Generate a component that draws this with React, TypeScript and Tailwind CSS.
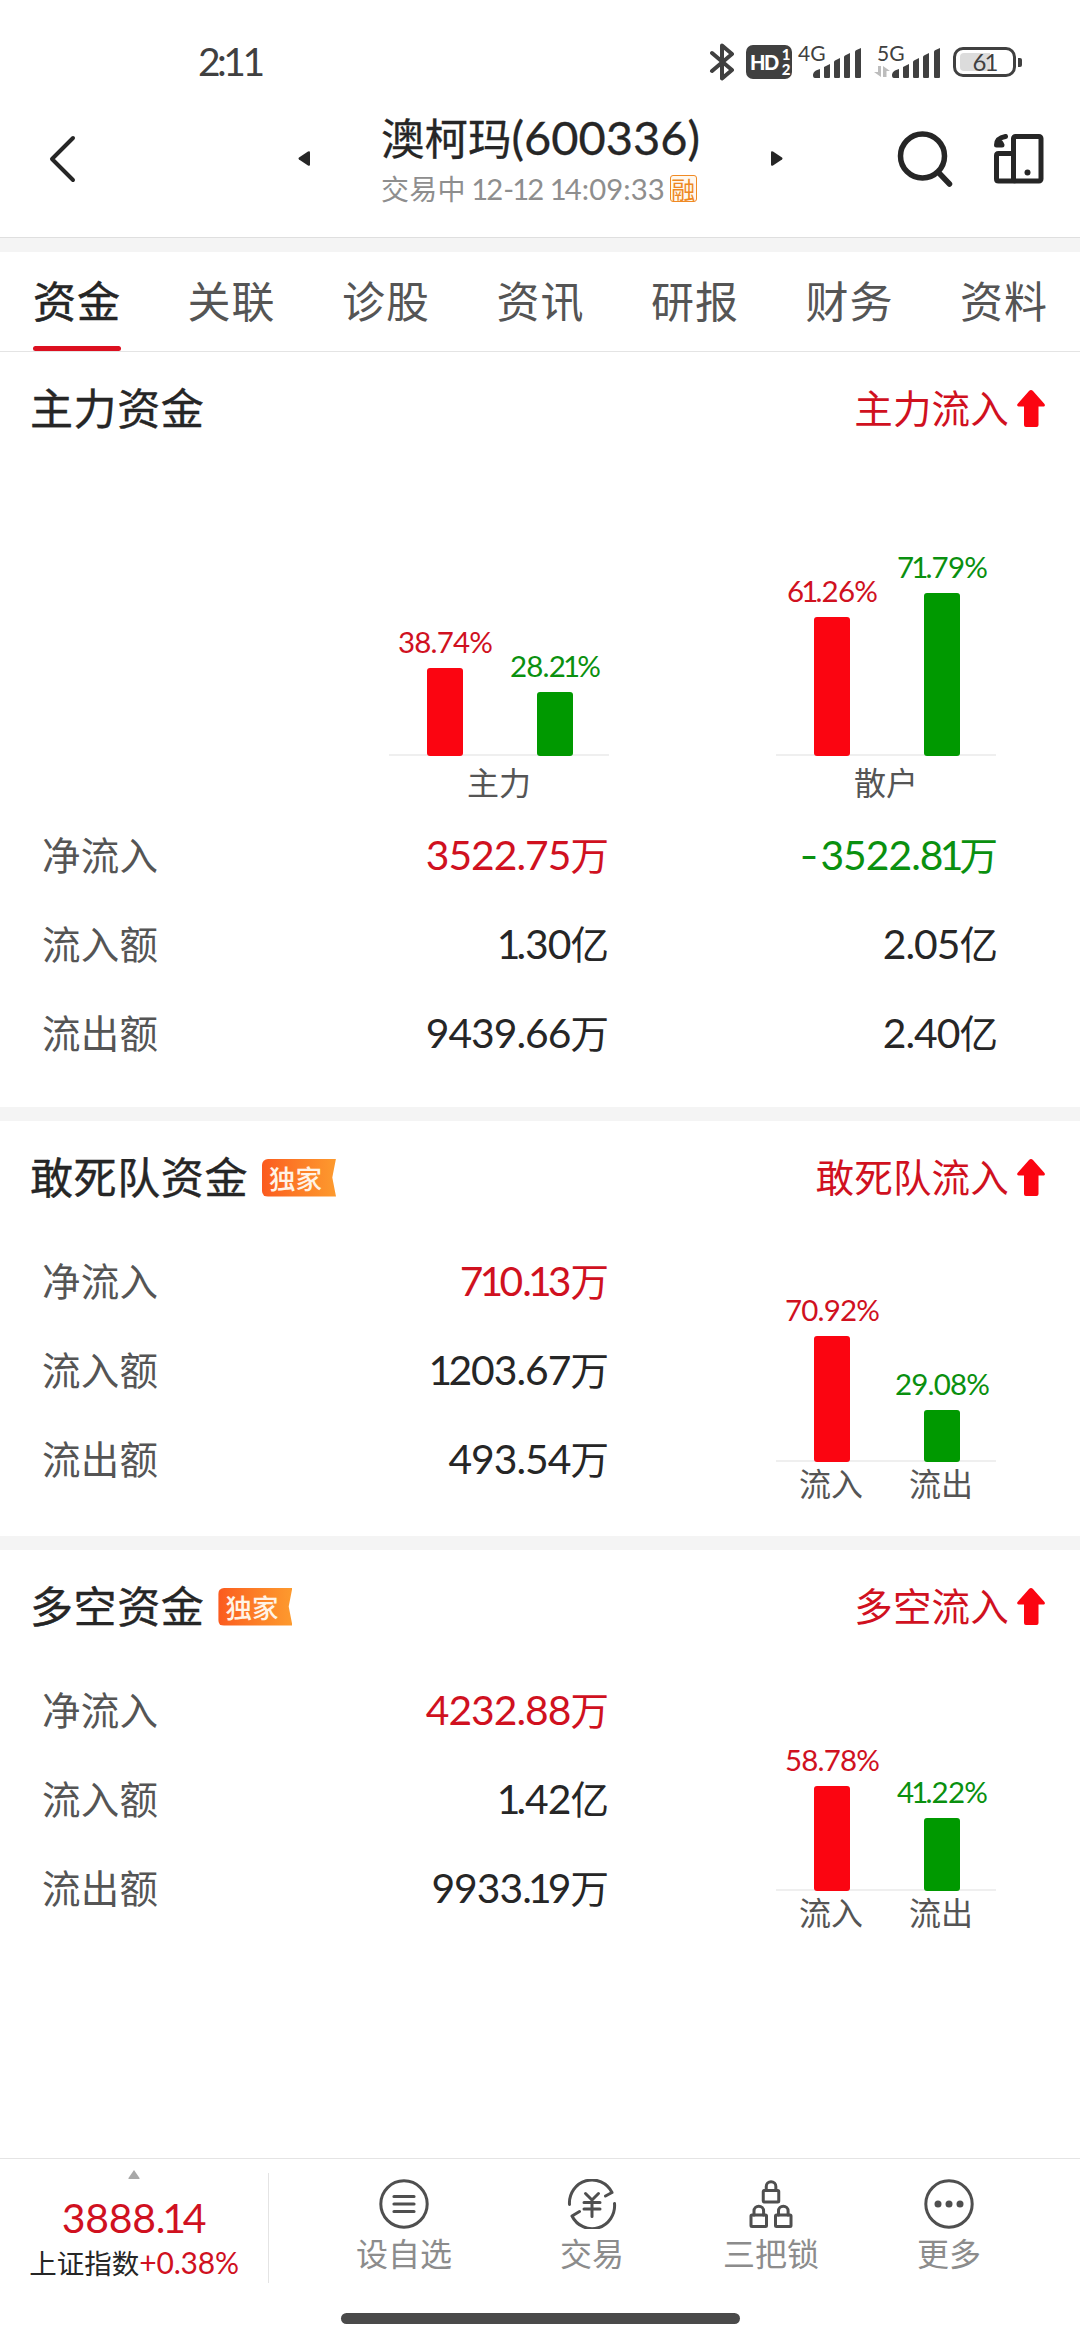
import React from 'react';

const RED = 'text-[#d0111f]';
const GREEN = 'text-[#0a900f]';

/** Digits in Lato: the figure one is set tighter, a leading minus sign wider. */
function Num({ text }: { text: string }) {
  return (
    <>
      {text.split(/(1|^-)/).filter(Boolean).map((p, i) => {
        if (p === '1') return <span key={i} className="mx-[-0.070em]">1</span>;
        if (p === '-') return <span key={i} className="mr-[0.070em] inline-block origin-right scale-x-125">-</span>;
        return <React.Fragment key={i}>{p}</React.Fragment>;
      })}
    </>
  );
}

/** Chinese text with its Latin digits set slightly larger in Lato. */
function Mixed({ text, latin = 'text-[1.06em] tracking-[-0.024em]' }: { text: string; latin?: string }) {
  const parts = text.split(/([\u4e00-\u9fff]+)/).filter(Boolean);
  return (
    <>
      {parts.map((p, i) =>
        /[\u4e00-\u9fff]/.test(p) ? (
          <span key={i}>{p}</span>
        ) : (
          <span key={i} className={`font-[Lato,sans-serif] ${latin}`}><Num text={p} /></span>
        ),
      )}
    </>
  );
}

function SignalBars() {
  return (
    <svg width="48" height="30" viewBox="0 0 48 30" fill="#404040">
      <path d="M0 27c0-3 3-5 7-6v9H2c-1.500 0-2-1-2-3z" />
      <path d="M11 19l6-3v12.500c0 1-.5 1.500-1.500 1.500h-3c-1 0-1.500-.5-1.500-1.500z" />
      <path d="M21 14q0-1 1-1.500l5-2.500v18.500c0 1-.5 1.500-1.500 1.500h-3c-1 0-1.500-.5-1.500-1.500z" />
      <path d="M31 9q0-1 1-1.500l5-2.500v23.500c0 1-.5 1.500-1.500 1.500h-3c-1 0-1.500-.5-1.500-1.500z" />
      <path d="M42 4q0-1 1-1.700l5-2.300v28.500c0 1-.5 1.500-1.500 1.500h-3c-1 0-1.500-.5-1.500-1.500z" />
    </svg>
  );
}

function StatusBar() {
  return (
    <div className="flex h-[84px] items-start pl-[198px] pr-[58px] pt-[43px] font-[Lato,sans-serif] text-[#404040]">
      <div className="text-[39px] leading-[37px] tracking-[-3.500px]">2:11</div>
      <div className="ml-auto flex h-[38px] items-center">
        <svg width="26" height="38" viewBox="0 0 26 38" fill="none" stroke="#404040" strokeWidth="4" strokeLinejoin="round" strokeLinecap="round">
          <path d="M3 10L23 27 13 35.500V2.500L23 11 3 28" />
        </svg>
        <div className="ml-[11px] flex h-[34px] w-[46px] items-center rounded-[7px] bg-[#404040] pl-[4px] text-white">
          <span className="text-[20px] font-black leading-[34px] tracking-[-1.500px]">HD</span>
          <span className="ml-[4px] flex flex-col text-[15px] font-black leading-[15px]"><span>1</span><span>2</span></span>
        </div>
        <div className="ml-[6px] flex h-[38px] w-[63px]">
          <span className="w-[15px] text-[21px] leading-[19px]">4G</span>
          <span className="pt-[5px]"><SignalBars /></span>
        </div>
        <div className="ml-[13px] flex h-[38px] w-[66px]">
          <div className="flex w-[18px] flex-col">
            <span className="pl-[3px] text-[21px] leading-[19px]">5G</span>
            <svg className="mt-[3px]" width="16" height="13" viewBox="0 0 16 13" fill="#bdbdbd">
              <path d="M4 1h3v11L0 7h4zM9 12V1l7 5h-3.500v6z" />
            </svg>
          </div>
          <span className="pt-[5px]"><SignalBars /></span>
        </div>
        <div className="ml-[13px] flex h-[30px] w-[63px] items-center rounded-[10px] border-[3px] border-[#404040] p-[4px]">
          <div className="flex h-[18px] w-[30px] justify-center rounded-l-[4px] bg-[#dcdcdc]">
            <span className="ml-[19px] text-[24px] leading-[18px] tracking-[-2px]">61</span>
          </div>
        </div>
        <div className="ml-[2px] h-[9px] w-[4px] rounded-r-[2px] bg-[#404040]" />
      </div>
    </div>
  );
}

function Header() {
  return (
    <header className="flex h-[154px] items-start border-b border-[#dfdfdf] text-[#262626]">
      <svg className="ml-[48px] mt-[50px]" width="30" height="50" viewBox="0 0 30 50" fill="none" stroke="#262626" strokeWidth="4" strokeLinecap="round" strokeLinejoin="round">
        <path d="M25 4L4 25l21 21" />
      </svg>
      <svg className="ml-[220px] mt-[67px]" width="12" height="15" viewBox="0 0 12 15" fill="#262626">
        <path d="M12 1.500v12Q12 15.500 10 14.500L1 8.500Q0 7.500 1 6.500L10 .5Q12-.5 12 1.500z" />
      </svg>
      <div className="ml-[71px] mt-[27px] w-[320px]">
        <h1 className="whitespace-nowrap text-[43.500px] leading-[52px] [-webkit-text-stroke:0.300px_#262626]">
          <Mixed text="澳柯玛(600336)" latin="text-[1.08em]" />
        </h1>
        <div className="mt-[7px] flex items-center whitespace-nowrap text-[28px] leading-[36px] tracking-[0.200px] text-[#8e8e8e]">
          <span><Mixed text="交易中 12-12 14:09:33" latin="text-[1.045em] tracking-[0.003em]" /></span>
          <span className="ml-[5px] flex size-[27px] items-center justify-center rounded-[3px] border-[1.500px] border-[#f08a24] bg-[#fff8ee] text-[24px] leading-none text-[#ee8822]">融</span>
        </div>
      </div>
      <svg className="ml-[70px] mt-[67px]" width="12" height="15" viewBox="0 0 12 15" fill="#262626">
        <path d="M0 1.500v12Q0 15.500 2 14.500L11 8.500Q12 7.500 11 6.500L2 .5Q0-.5 0 1.500z" />
      </svg>
      <svg className="ml-[114px] mt-[46px]" width="56" height="60" viewBox="0 0 56 60" fill="none" stroke="#262626" strokeWidth="5.500" strokeLinecap="round">
        <circle cx="25.500" cy="26" r="22" />
        <path d="M42.500 43.500L52.500 54" />
      </svg>
      <svg className="ml-[41px] mt-[50px]" width="50" height="50" viewBox="0 0 50 50" fill="none" stroke="#262626" strokeWidth="5" strokeLinejoin="round" strokeLinecap="round">
        <rect x="19.500" y="2.500" width="27.500" height="44.500" rx="2" />
        <path d="M19.500 19.500H4.500Q2.500 19.500 2.500 21.500V45Q2.500 47 4.500 47H20" />
        <path d="M11.500 2.500C6 3.500 2.500 6 2.500 11H8L7 9" />
        <circle cx="33.500" cy="38.500" r="3" fill="#262626" stroke="none" />
      </svg>
    </header>
  );
}

const TABS = ['资金', '关联', '诊股', '资讯', '研报', '财务', '资料'];

function Tabs() {
  return (
    <nav className="flex h-[100px] justify-between border-b border-[#e4e4e4] pl-[33px] pr-[32px] text-[43px]">
      {TABS.map((t, i) => (
        <div key={t} className="flex w-[88px] flex-col items-center whitespace-nowrap leading-[94px] tracking-[1px] text-[#555]">
          <span className={i === 0 ? 'h-[94px] text-[#262626] [-webkit-text-stroke:0.500px_#262626]' : 'h-[94px]'}>{t}</span>
          {i === 0 && <span className="h-[5px] w-full rounded-full bg-[#dc1020]" />}
        </div>
      ))}
    </nav>
  );
}

function Ribbon() {
  return (
    <span className="ml-[14px] mt-px flex h-[38px] w-[74px] items-center rounded-l-[6px] bg-linear-to-r from-[#fb5a1e] via-[#fc7d27] to-[#fd9a2e] pl-[7px] pt-px text-[26.500px] font-medium leading-none text-[#fff3e6] [clip-path:polygon(0_0,100%_0,95%_50%,100%_100%,0_100%)]">
      独家
    </span>
  );
}

function SectionTitle({ title, flow, ribbon }: { title: string; flow: string; ribbon?: boolean }) {
  return (
    <div className="flex h-[112px] items-center pl-[30px] pr-[35px]">
      <h2 className="-mt-[3px] text-[43px] leading-none tracking-[0.600px] text-[#262626] [-webkit-text-stroke:0.400px_#262626]">{title}</h2>
      {ribbon && <Ribbon />}
      <span className={`-mt-[3px] ml-auto text-[38.500px] leading-none tracking-[0.200px] ${RED}`}>{flow}</span>
      <svg className="ml-[8px]" width="28" height="37" viewBox="0 0 28 37" fill="#fb0511">
        <path d="M14 0Q15 0 16 1L27.500 14Q28.500 16 27 16.500H21.500V35Q21.500 37 19.500 37H9Q7 37 7 35V16.500H1.500Q-.5 16 .5 14L12 1Q13 0 14 0z" />
      </svg>
    </div>
  );
}

function Bar({ pct, height, red }: { pct: string; height: number; red?: boolean }) {
  return (
    <div className="flex w-[36px] flex-col items-center">
      <span className={`whitespace-nowrap font-[Lato,sans-serif] text-[29.500px] leading-[30px] tracking-[-0.800px] ${red ? RED : GREEN}`}><Num text={pct} /></span>
      <div className={`mt-[11px] w-full rounded-[3px] ${red ? 'bg-[#fb0511]' : 'bg-[#009900]'}`} style={{ height }} />
    </div>
  );
}

function BarPair({ a, b, ha, hb, labels }: { a: string; b: string; ha: number; hb: number; labels: string[] }) {
  return (
    <div className="w-[220px]">
      <div className="flex items-end gap-[74px] pl-[38px] shadow-[inset_0_-2px_0_#efefef]">
        <Bar pct={a} height={ha} red />
        <Bar pct={b} height={hb} />
      </div>
      <div className={`flex gap-[46px] text-[32px] leading-[32px] text-[#555] ${labels.length === 1 ? 'mt-[9px] pl-[78px]' : 'mt-[4px] pl-[23px]'}`}>
        {labels.map((l) => <span key={l} className="w-[64px] whitespace-nowrap">{l}</span>)}
      </div>
    </div>
  );
}

type Row = { label: string; main: string; retail?: string };

function Rows({ rows }: { rows: Row[] }) {
  return (
    <div className="text-[38.500px]">
      {rows.map((r, i) => (
        <div key={r.label} className="flex h-[89px] items-baseline leading-[87px]">
          <span className="w-[160px] whitespace-nowrap tracking-[0.200px] text-[#555]">{r.label}</span>
          <span className={`w-[407px] whitespace-nowrap text-right ${i === 0 ? RED : 'text-[#262626]'}`}><Mixed text={r.main} /></span>
          {r.retail && (
            <span className={`w-[389px] whitespace-nowrap text-right ${i === 0 ? GREEN : 'text-[#262626]'}`}><Mixed text={r.retail} /></span>
          )}
        </div>
      ))}
    </div>
  );
}

function Band() {
  return <div className="h-[14px] bg-[#f4f4f4]" />;
}

function FlowSection(p: { title: string; flow: string; rows: Row[]; a: string; b: string; ha: number; hb: number }) {
  return (
    <section className="h-[415px]">
      <SectionTitle title={p.title} flow={p.flow} ribbon />
      <div className="flex pl-[42px] pt-[3px]">
        <Rows rows={p.rows} />
        <div className="ml-[167px] flex h-[262px] items-end">
          <BarPair a={p.a} b={p.b} ha={p.ha} hb={p.hb} labels={['流入', '流出']} />
        </div>
      </div>
    </section>
  );
}

function Lock({ x, y }: { x: number; y: number }) {
  return (
    <g transform={`translate(${x} ${y})`}>
      <rect x="1.500" y="10" width="15.500" height="11.500" rx="1" />
      <path d="M4.500 10V6a4.800 4.800 0 0 1 9.600 0v4" />
    </g>
  );
}

const NAV = [
  {
    label: '设自选', pad: '',
    icon: <><circle cx="25" cy="25" r="23.200" /><path d="M15 17.500h20M15 25h20M15 32.500h20" strokeWidth="3.200" /></>,
  },
  {
    label: '交易', pad: 'ml-[10px]',
    icon: <><path d="M2.500 25.500A22.500 23 0 0 1 45 13.500L38.500 17M47.500 24.500A22.500 23 0 0 1 5 37L12.500 32.500" /><path d="M18.500 14.500l6.500 6.500 6.500-6.500M25 21v16.500M17 23.500h16M17 30h16" /></>,
  },
  {
    label: '三把锁', pad: 'ml-px',
    icon: <><Lock x={15.75} y={1.5} /><Lock x={3.5} y={26} /><Lock x={28} y={26} /></>,
  },
  {
    label: '更多', pad: '',
    icon: <><circle cx="25" cy="25" r="23.200" /><g fill="#4f4f4f" stroke="none"><circle cx="14" cy="25" r="3.500" /><circle cx="25" cy="25" r="3.500" /><circle cx="36" cy="25" r="3.500" /></g></>,
  },
];

function Footer() {
  return (
    <footer className="mt-auto h-[182px] border-t border-[#e4e4e4]">
      <div className="flex h-[154px] items-start">
        <div className="mt-[14px] flex h-[110px] w-[269px] flex-col items-center border-r border-[#e4e4e4]">
          <svg className="-mt-[3px] shrink-0" width="12" height="9" viewBox="0 0 11 9" fill="#a8a8a8"><path d="M5.500 0L11 8v1H0V8z" /></svg>
          <span className={`mt-[17px] font-[Lato,sans-serif] text-[41px] leading-[44px] tracking-[-0.300px] ${RED}`}><Num text="3888.14" /></span>
          <span className="mt-[5px] whitespace-nowrap text-[27.500px] leading-[34px] text-[#262626]">
            上证指数<span className={`font-[Lato,sans-serif] text-[30px] tracking-[-0.200px] ${RED}`}>+0.38%</span>
          </span>
        </div>
        <nav className="flex gap-[98px] pl-[87px] pt-[20px]">
          {NAV.map((n) => (
            <div key={n.label} className={`flex flex-col items-center text-[32px] leading-[34px] text-[#8c8c8c] ${n.pad}`}>
              <svg width="50" height="50" viewBox="0 0 50 50" fill="none" stroke="#4f4f4f" strokeWidth="3" strokeLinecap="round" strokeLinejoin="round">{n.icon}</svg>
              <span className="mt-[6px] whitespace-nowrap">{n.label}</span>
            </div>
          ))}
        </nav>
      </div>
      <div className="mx-auto h-[11px] w-[399px] rounded-full bg-[#4a4a4a]" />
    </footer>
  );
}

export default function App() {
  return (
    <div className="flex h-[2340px] w-[1080px] flex-col overflow-hidden bg-white font-['Noto_Sans_CJK_SC',sans-serif]">
      <StatusBar />
      <Header />
      <div className="h-[14px] bg-[#f4f4f4]" />
      <Tabs />
      <section className="h-[755px]">
        <SectionTitle title="主力资金" flow="主力流入" />
        <div className="flex h-[346px] items-end gap-[167px] pl-[389px] pb-[13px]">
          <BarPair a="38.74%" b="28.21%" ha={88} hb={64} labels={['主力']} />
          <BarPair a="61.26%" b="71.79%" ha={139} hb={163} labels={['散户']} />
        </div>
        <div className="pl-[42px]">
          <Rows
            rows={[
              { label: '净流入', main: '3522.75万', retail: '-3522.81万' },
              { label: '流入额', main: '1.30亿', retail: '2.05亿' },
              { label: '流出额', main: '9439.66万', retail: '2.40亿' },
            ]}
          />
        </div>
      </section>
      <Band />
      <FlowSection
        title="敢死队资金"
        flow="敢死队流入"
        rows={[
          { label: '净流入', main: '710.13万' },
          { label: '流入额', main: '1203.67万' },
          { label: '流出额', main: '493.54万' },
        ]}
        a="70.92%" b="29.08%" ha={126} hb={52}
      />
      <Band />
      <FlowSection
        title="多空资金"
        flow="多空流入"
        rows={[
          { label: '净流入', main: '4232.88万' },
          { label: '流入额', main: '1.42亿' },
          { label: '流出额', main: '9933.19万' },
        ]}
        a="58.78%" b="41.22%" ha={105} hb={73}
      />
      <Footer />
    </div>
  );
}
